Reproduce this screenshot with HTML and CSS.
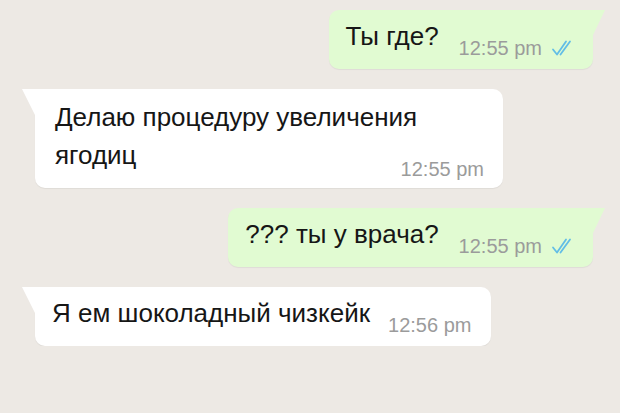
FILE: index.html
```html
<!DOCTYPE html>
<html lang="ru">
<head>
  <meta charset="UTF-8" />
  <title>Чат</title>
  <link rel="stylesheet" href="styles.css">
</head>
<body>
  <div class="chat">
    <div class="msg out">
      <span class="text">Ты где?</span>
      <span class="meta">
        <span class="time">12:55 pm</span>
        <svg class="ticks" width="22" height="16" viewBox="0 0 22 16"><path d="M2 9.5l4 5L15 1.5M9.5 14.5L19 1.5" fill="none" stroke="#62bde6" stroke-width="1.8" stroke-linecap="round" stroke-linejoin="round"/></svg>
      </span>
    </div>

    <div class="msg in wrap">
      <span class="text">Делаю процедуру увеличения ягодиц</span>
      <span class="meta">
        <span class="time">12:55 pm</span>
      </span>
    </div>

    <div class="msg out">
      <span class="text">??? ты у врача?</span>
      <span class="meta">
        <span class="time">12:55 pm</span>
        <svg class="ticks" width="22" height="16" viewBox="0 0 22 16"><path d="M2 9.5l4 5L15 1.5M9.5 14.5L19 1.5" fill="none" stroke="#62bde6" stroke-width="1.8" stroke-linecap="round" stroke-linejoin="round"/></svg>
      </span>
    </div>

    <div class="msg in">
      <span class="text">Я ем шоколадный чизкейк</span>
      <span class="meta">
        <span class="time">12:56 pm</span>
      </span>
    </div>
  </div>
</body>
</html>
```

FILE: styles.css
```css
body {
  margin: 0;
  background-color: #ede9e4;
  font-family: 'Liberation Sans', Arial, sans-serif;
}
.chat {
  display: flex;
  flex-direction: column;
  gap: 20px;
  padding: 10px 27px 0 35px;
}
.msg {
  position: relative;
  display: flex;
  align-items: flex-end;
  gap: 20px;
  border-radius: 10px;
  box-shadow: 0 1px 1px rgba(0, 0, 0, 0.06);
  box-sizing: border-box;
  padding: 8px 17px 11px 17px;
}
.msg .text {
  font-size: 26px;
  color: #161616;
  line-height: 36px;
  margin-bottom: 4px;
}
.meta {
  display: flex;
  align-items: center;
  gap: 9px;
}
.time {
  font-size: 20px;
  line-height: 20px;
  color: #9b9b9b;
}
.out {
  align-self: flex-end;
  background-color: #e1fbd2;
  border-top-right-radius: 0;
  padding-right: 20px;
}
.out::after {
  content: "";
  position: absolute;
  top: 0;
  right: -12px;
  border-top: 25px solid #e1fbd2;
  border-right: 12px solid transparent;
}
.in {
  align-self: flex-start;
  background-color: #ffffff;
  border-top-left-radius: 0;
  gap: 18px;
  padding-right: 20px;
}
.in::before {
  content: "";
  position: absolute;
  top: 0;
  left: -13px;
  border-top: 26px solid #ffffff;
  border-left: 13px solid transparent;
}
.wrap {
  flex-direction: column;
  align-items: stretch;
  gap: 0;
  width: 468px;
  padding: 9px 19px 9px 20px;
}
.wrap .text {
  line-height: 38px;
  margin-bottom: 0;
}
.wrap .meta {
  align-self: flex-end;
  margin-top: -15px;
}
```
